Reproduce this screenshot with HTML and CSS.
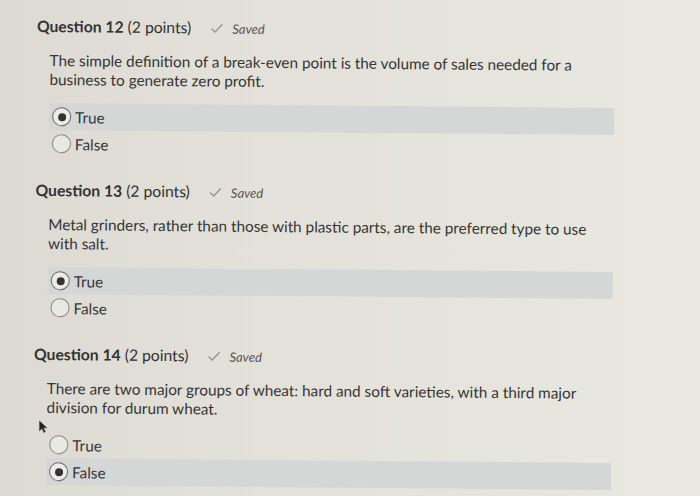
FILE: index.html
```html
<!DOCTYPE html>
<html lang="en">
<head>
<meta charset="utf-8">
<title>Quiz</title>
<link rel="stylesheet" href="styles.css">
</head>
<body>
<div class="page">
  <section class="question">
    <div class="q-head">
      <span class="q-title"><strong>Question 12</strong> (2 points)</span>
      <span class="saved"><svg class="check" width="12" height="10" viewBox="0 0 12 10"><path d="M1 5.5 L4.2 8.5 L11 1.2" fill="none" stroke="#9a9a98" stroke-width="1.6" stroke-linecap="round" stroke-linejoin="round"/></svg><em>Saved</em></span>
    </div>
    <p class="q-text">The simple definition of a break-even point is the volume of sales needed for a business to generate zero profit.</p>
    <div class="options">
      <div class="option selected"><span class="radio"></span><span class="label">True</span></div>
      <div class="option"><span class="radio"></span><span class="label">False</span></div>
    </div>
  </section>
  <section class="question">
    <div class="q-head">
      <span class="q-title"><strong>Question 13</strong> (2 points)</span>
      <span class="saved"><svg class="check" width="12" height="10" viewBox="0 0 12 10"><path d="M1 5.5 L4.2 8.5 L11 1.2" fill="none" stroke="#9a9a98" stroke-width="1.6" stroke-linecap="round" stroke-linejoin="round"/></svg><em>Saved</em></span>
    </div>
    <p class="q-text">Metal grinders, rather than those with plastic parts, are the preferred type to use with salt.</p>
    <div class="options">
      <div class="option selected"><span class="radio"></span><span class="label">True</span></div>
      <div class="option"><span class="radio"></span><span class="label">False</span></div>
    </div>
  </section>
  <section class="question">
    <div class="q-head">
      <span class="q-title"><strong>Question 14</strong> (2 points)</span>
      <span class="saved"><svg class="check" width="12" height="10" viewBox="0 0 12 10"><path d="M1 5.5 L4.2 8.5 L11 1.2" fill="none" stroke="#9a9a98" stroke-width="1.6" stroke-linecap="round" stroke-linejoin="round"/></svg><em>Saved</em></span>
    </div>
    <p class="q-text">There are two major groups of wheat: hard and soft varieties, with a third major division for durum wheat.</p>
    <div class="options">
      <div class="option"><span class="radio"></span><span class="label">True</span></div>
      <div class="option selected"><span class="radio"></span><span class="label">False</span></div>
    </div>
  </section>
  <svg class="pointer" width="9" height="13" viewBox="0 0 9 13"><path d="M1 1 L1 11 L3.5 8.5 L5.5 12.5 L7 11.8 L5 7.8 L8.5 7.8 Z" fill="#222" stroke="#555" stroke-width="0.6"/></svg>
</div>
</body>
</html>
```

FILE: styles.css
```css
html, body {
  margin: 0;
  padding: 0;
}

body {
  width: 700px;
  height: 496px;
  overflow: hidden;
  background: linear-gradient(90deg, #dcdad2 0%, #e2e0d8 30%, #e6e5dd 70%, #e9e8e1 100%);
  font-family: Lato, "Open Sans", sans-serif;
  color: #3a3a3a;
}

.page {
  position: relative;
  padding: 16px 0 0 35px;
  transform: rotate(0.5deg);
  transform-origin: 40px 250px;
}

.question {
  margin-bottom: 23px;
}

.q-head {
  display: flex;
  align-items: baseline;
  font-size: 15.7px;
  line-height: 20px;
  color: #333;
}

.q-title strong {
  font-weight: 700;
}

.saved {
  display: inline-flex;
  align-items: baseline;
  margin-left: 20px;
  font-size: 13px;
  color: #555;
}

.check {
  margin-right: 9px;
  align-self: center;
}

.saved em {
  font-style: italic;
}

.q-text {
  margin: 14px 0 0 13px;
  max-width: 545px;
  font-size: 15.3px;
  line-height: 19px;
  color: #363636;
}

.options {
  margin: 14px 0 0 13px;
  width: 565px;
}

.option {
  display: flex;
  align-items: center;
  height: 27px;
  padding-left: 3px;
  font-size: 15.3px;
}

.option.selected {
  background: #d4d7d6;
}

.radio {
  box-sizing: border-box;
  width: 19px;
  height: 19px;
  border-radius: 50%;
  border: 1.5px solid #8e8e8c;
  background: #e9e8e3;
  display: flex;
  align-items: center;
  justify-content: center;
  box-shadow: 0 0 0 0.5px rgba(0, 0, 0, 0.08);
}

.option.selected .radio {
  border-color: #6f6f6e;
  background: #ecebe7;
}

.option.selected .radio::after {
  content: "";
  width: 8px;
  height: 8px;
  border-radius: 50%;
  background: #333;
}

.label {
  margin-left: 4px;
  color: #363636;
}

.pointer {
  position: absolute;
  left: 40px;
  top: 420px;
}
```
